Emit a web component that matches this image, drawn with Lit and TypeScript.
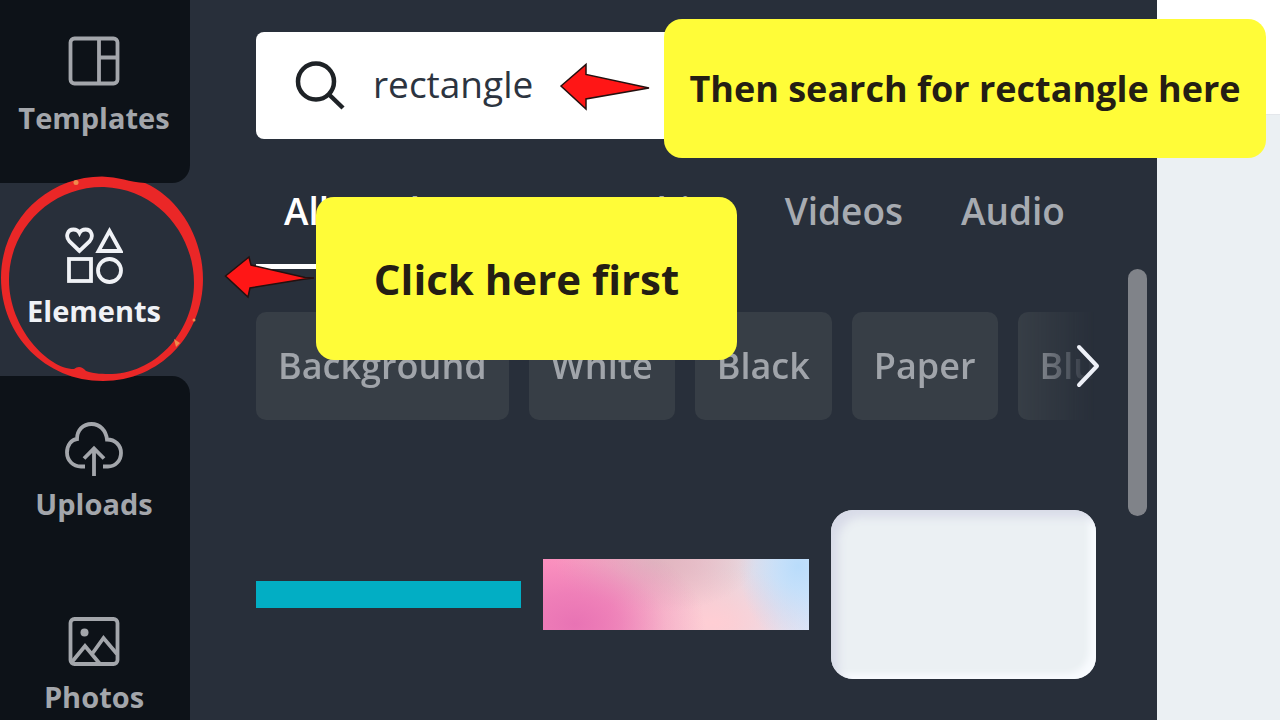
import { LitElement, html, css, svg } from "lit";
import { customElement, property, state } from "lit/decorators.js";
import { classMap } from "lit/directives/class-map.js";

const icons: Record<string, unknown> = {
  templates: svg`
    <rect x="5.5" y="5.5" width="47" height="45" rx="4"/>
    <path d="M34 5.5v45M34 24.5h18.5"/>`,
  elements: svg`
    <path d="M14.500 25L4.500 15.500C0 10.500 2.500 3.500 8.500 3.500C11.500 3.500 13.500 5 14.500 7C15.500 5 17.500 3.500 20.500 3.500C26.500 3.500 29 10.500 24.500 15.500Z"/>
    <path d="M44.500 5L55.500 25H33.500Z"/>
    <rect x="4" y="33" width="22" height="22"/>
    <circle cx="44.500" cy="44.500" r="11.500"/>`,
  uploads: svg`
    <path d="M20 47.500h-4C8 47.500 2 41.500 2 33.500C2 26 6.500 20.500 12 20C12 11 18 5 26.500 5S41 11.500 42 20.500C50 20.500 56 26 56 34S50 47.500 43 47.500H38"/>
    <path d="M29 57V30M19 39.500L29 29.500L39 39.500"/>`,
  photos: svg`
    <rect x="5.500" y="7" width="47" height="45" rx="4"/>
    <circle class="dot" cx="19.500" cy="20.500" r="4"/>
    <path d="M6.500 50.500L20 34L35 52M27 42L38.500 26L52 42"/>`,
};

@customElement("nav-item")
export class NavItem extends LitElement {
  @property() icon = "";
  @property() label = "";
  @property({ type: Boolean }) active = false;

  static styles = css`
    :host { display: block; }
    .item {
      display: flex;
      flex-direction: column;
      align-items: center;
      gap: 9px;
      width: 100%;
      padding: 43px 2px 47px 0;
      border: 0;
      background: none;
      color: #a3a6ab;
      font: 700 29px/36px "Open Sans", "Noto Sans", sans-serif;
      cursor: pointer;
    }
    .active { color: #f0f2f6; }
    svg { width: 58px; height: 58px; fill: none; stroke: currentColor; stroke-width: 3.8; display: block; }
    .dot { fill: currentColor; stroke: none; }
  `;

  render() {
    return html`<button class=${classMap({ item: true, active: this.active })}>
      <svg viewBox="0 0 58 58" aria-hidden="true">${icons[this.icon]}</svg>
      <span>${this.label}</span>
    </button>`;
  }
}

@customElement("app-root")
export class AppRoot extends LitElement {
  @state() private query = "rectangle";
  private tabs = ["All", "Photos", "Graphics", "Videos", "Audio"];
  private chips = ["Background", "White", "Black", "Paper", "Blue"];

  static styles = css`
    :host {
      display: block;
      position: relative;
      height: 100vh;
      overflow: hidden;
      font-family: "Open Sans", "Noto Sans", sans-serif;
    }
    * { box-sizing: border-box; }
    button { font-family: inherit; border: 0; cursor: pointer; }
    .app {
      display: grid;
      grid-template-columns: 190px minmax(0, 1fr) 123px;
      height: 100%;
      background: #282f3a;
    }
    .rail { overflow: hidden; }
    .before, .after { background: #0d1218; }
    .before { height: 183px; display: flex; flex-direction: column; justify-content: flex-end; border-bottom-right-radius: 18px; }
    .after { border-top-right-radius: 18px; }
    .panel { padding: 32px 10px 0 66px; overflow: hidden; }
    .search {
      display: flex;
      align-items: center;
      gap: 28px;
      height: 107px;
      margin-right: 51px;
      padding: 0 39px;
      background: #fff;
      border-radius: 8px;
    }
    .search svg { width: 50px; height: 50px; fill: none; stroke: #1e2226; stroke-width: 4.5; flex: none; }
    .search input {
      flex: 1;
      min-width: 0;
      padding: 0 0 4px;
      border: 0;
      outline: 0;
      background: none;
      color: #2c3440;
      font: 400 37px/52px "Open Sans", "Noto Sans", sans-serif;
    }
    .tabs { display: flex; gap: 2px; margin-top: 46px; }
    .tab {
      height: 84px;
      padding: 0 28px 28px;
      background: none;
      border-bottom: 5px solid transparent;
      color: #a7abb1;
      font-size: 37px;
      font-weight: 600;
      line-height: 50px;
    }
    .tab.on { color: #fff; border-color: #fff; }
    .scroll { display: grid; grid-template-columns: minmax(0, 1fr) 19px; column-gap: 32px; }
    .bar { height: 247px; border-radius: 10px; background: #808389; }
    .chips { position: relative; margin-top: 43px; }
    .strip {
      display: flex;
      gap: 20px;
      overflow: hidden;
      mask-image: linear-gradient(to right, #000 calc(100% - 76px), transparent calc(100% - 2px));
    }
    .chip {
      flex: none;
      height: 108px;
      padding: 0 22px;
      border-radius: 10px;
      background: #373e46;
      color: #a0a4aa;
      font-size: 36px;
      font-weight: 600;
      line-height: 50px;
    }
    .next { position: absolute; right: -4px; top: 0; height: 100%; width: 24px; padding: 0; background: none; color: #eef1f8; }
    .next svg { display: block; width: 24px; height: 44px; fill: none; stroke: currentColor; stroke-width: 4; stroke-linecap: round; stroke-linejoin: round; }
    .results { display: grid; grid-template-columns: repeat(3, minmax(0, 1fr)); gap: 22px; align-items: center; margin-top: 90px; }
    .result { display: block; width: 100%; padding: 0; }
    .teal { height: 27px; background: #02aec4; }
    .blend {
      height: 71px;
      background:
        radial-gradient(ellipse 130px 90px at 12% 92%, #e873b4, #e873b4b0 35%, #ea78b640 70%, #ea78b600 100%),
        radial-gradient(ellipse 100px 50px at 42% 5%, #dfb6c0, #dfb6c000 100%),
        radial-gradient(ellipse 60px 80px at 96% 10%, #b9dcfb, #b9dcfb00 100%),
        radial-gradient(ellipse 110px 55px at 64% 90%, #ffced4, #ffd2d600 100%),
        linear-gradient(to right, #ff95c0, #ffa4c4 25%, #f6bccb 45%, #ead4da 70%, #e2e8f6 90%, #dfeafb);
    }
    .soft {
      height: 169px;
      border-radius: 22px;
      background: #ebf0f3;
      box-shadow: inset 9px 9px 10px -2px #d8dbe8, inset -8px -6px 6px -1px #f8fbfe;
    }
    .canvas { background: #ebf0f3; }
    .topbar { height: 115px; background: #fff; border-bottom: 1px solid #e4e7eb; }
    .callout {
      position: absolute;
      display: grid;
      place-items: center;
      margin: 0;
      border-radius: 18px;
      background: #fffc38;
      color: #241e14;
      font-weight: 700;
      white-space: nowrap;
    }
    .second { left: 664px; top: 19px; width: 602px; height: 139px; font-size: 36px; }
    .first { left: 316px; top: 197px; width: 421px; height: 163px; font-size: 42px; }
    .marks { position: absolute; left: 0; top: 0; width: 660px; height: 400px; pointer-events: none; }
    .arrow { fill: #ff1616; stroke: #24100f; stroke-width: 1.5; stroke-linejoin: miter; }
    .ring { fill: #ea2727; fill-rule: evenodd; }
    .fleck { fill: #f08a4b; }
  `;

  private onInput(e: Event) {
    this.query = (e.target as HTMLInputElement).value;
  }

  render() {
    return html`
      <div class="app">
        <nav class="rail" aria-label="Library">
          <div class="before"><nav-item icon="templates" label="Templates"></nav-item></div>
          <nav-item icon="elements" label="Elements" active></nav-item>
          <div class="after">
            <nav-item icon="uploads" label="Uploads"></nav-item>
            <nav-item icon="photos" label="Photos"></nav-item>
          </div>
        </nav>

        <main class="panel">
          <label class="search">
            <svg viewBox="0 0 50 50" aria-hidden="true">
              <circle cx="21" cy="20.500" r="18"/><path d="M33.500 33L48 47"/>
            </svg>
            <input type="text" aria-label="Search elements" .value=${this.query} @input=${this.onInput} />
          </label>
          <div class="tabs">
            ${this.tabs.map((t, i) => html`<button class=${classMap({ tab: true, on: i === 0 })}>${t}</button>`)}
          </div>
          <div class="scroll">
            <div>
              <div class="chips">
                <div class="strip">${this.chips.map((c) => html`<button class="chip">${c}</button>`)}</div>
                <button class="next" aria-label="More">
                  <svg viewBox="0 0 24 44"><path d="M3 3L21 22L3 41"/></svg>
                </button>
              </div>
              <div class="results">
                <button class="result teal" aria-label="Teal rectangle"></button>
                <button class="result blend" aria-label="Gradient rectangle"></button>
                <button class="result soft" aria-label="Soft rounded rectangle"></button>
              </div>
            </div>
            <div class="bar"></div>
          </div>
        </main>

        <div class="canvas"><div class="topbar"></div></div>
      </div>

      <svg class="marks" viewBox="0 0 660 400" aria-hidden="true">
        <path class="ring" d="M102 176.500C118 177 130 182 145 183C181 199 203 240 203 279C203 335 160 381 103 381C45 381 1 335 1 278C1 222 46 176.500 102 176.500ZM104 187C52 186 9 228 9 280C9 328 48 369 74 369Q80 364 86 371C94 374 104 374 112 374C158 372 194 330 194 283C194 235 158 189 104 187Z"/>
        <circle class="fleck" cx="76" cy="182.500" r="2.500"/>
        <path class="fleck" d="M174 339l6 4l-4 4z"/>
        <circle class="fleck" cx="194" cy="320" r="1.500"/>
        <path class="arrow" d="M225.500 276L249 257L251 265L305 277.500L314 278L305 279L250 288L248 297Z"/>
        <path class="arrow" d="M561 86L586 64.500V74.500L649 88L586 99V109Z"/>
      </svg>
      <p class="callout second">Then search for rectangle here</p>
      <p class="callout first">Click here first</p>
    `;
  }
}
